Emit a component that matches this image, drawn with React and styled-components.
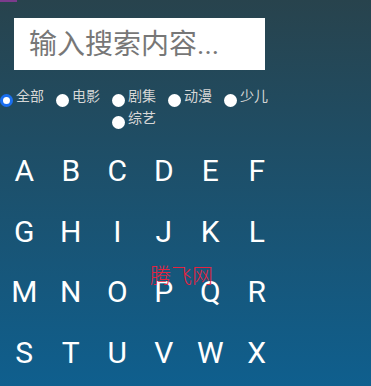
import React, { useState } from "react";
import styled, { createGlobalStyle } from "styled-components";

const GlobalStyle = createGlobalStyle`
  html, body {
    margin: 0;
    padding: 0;
  }
  body {
    font-family: Roboto, "Noto Sans CJK SC", sans-serif;
  }
`;

const Page = styled.div`
  position: relative;
  height: 100vh;
  overflow: hidden;
  background: linear-gradient(to bottom, #28434d 0%, #0f5f8e 100%);
`;

const TopMark = styled.div`
  width: 17px;
  height: 2px;
  background: #7b3b8c;
`;

const SearchBox = styled.input`
  display: block;
  box-sizing: border-box;
  width: 251px;
  height: 52px;
  margin: 16px 0 0 14px;
  padding: 0 0 0 15px;
  border: none;
  outline: none;
  background: #ffffff;
  font-family: Roboto, "Noto Sans CJK SC", sans-serif;
  font-size: 28px;
  color: #333;

  &::placeholder {
    color: #777777;
  }
`;

const RadioGroup = styled.div`
  display: flex;
  flex-wrap: wrap;
  justify-content: center;
  column-gap: 12px;
  width: 268px;
  margin-top: 15px;
`;

const RadioItem = styled.label`
  display: flex;
  align-items: flex-start;
  cursor: pointer;
`;

const RadioDot = styled.span`
  box-sizing: border-box;
  width: 13px;
  height: 13px;
  margin: 9px 3px 0 0;
  border-radius: 50%;
  background: #ffffff;
  border: ${(p) => (p.$checked ? "3px solid #1a6ff0" : "none")};
`;

const RadioText = styled.span`
  width: 28px;
  font-family: "Noto Sans CJK SC", sans-serif;
  font-size: 14px;
  line-height: 20px;
  color: #d6d6d6;
`;

const LetterGrid = styled.div`
  display: grid;
  grid-template-columns: repeat(6, 46.5px);
  grid-auto-rows: 60.5px;
  padding-left: 1px;
  margin-top: 12px;
`;

const Letter = styled.div`
  font-family: Roboto, sans-serif;
  font-size: 30px;
  line-height: 60px;
  color: #ffffff;
  text-align: center;
`;

const Watermark = styled.div`
  position: absolute;
  left: 150px;
  top: 263px;
  font-family: "Noto Sans CJK SC", serif;
  font-size: 21px;
  line-height: 22px;
  font-weight: 300;
  color: #e6233f;
  pointer-events: none;
`;

const categories = ["全部", "电影", "剧集", "动漫", "少儿", "综艺"];
const letters = "ABCDEFGHIJKLMNOPQRSTUVWX".split("");

export default function App() {
  const [selected, setSelected] = useState("全部");

  return (
    <Page>
      <GlobalStyle />
      <TopMark />
      <SearchBox placeholder="输入搜索内容..." />
      <RadioGroup>
        {categories.map((c) => (
          <RadioItem key={c} onClick={() => setSelected(c)}>
            <RadioDot $checked={selected === c} />
            <RadioText>{c}</RadioText>
          </RadioItem>
        ))}
      </RadioGroup>
      <LetterGrid>
        {letters.map((l) => (
          <Letter key={l}>{l}</Letter>
        ))}
      </LetterGrid>
      <Watermark>腾飞网</Watermark>
    </Page>
  );
}
